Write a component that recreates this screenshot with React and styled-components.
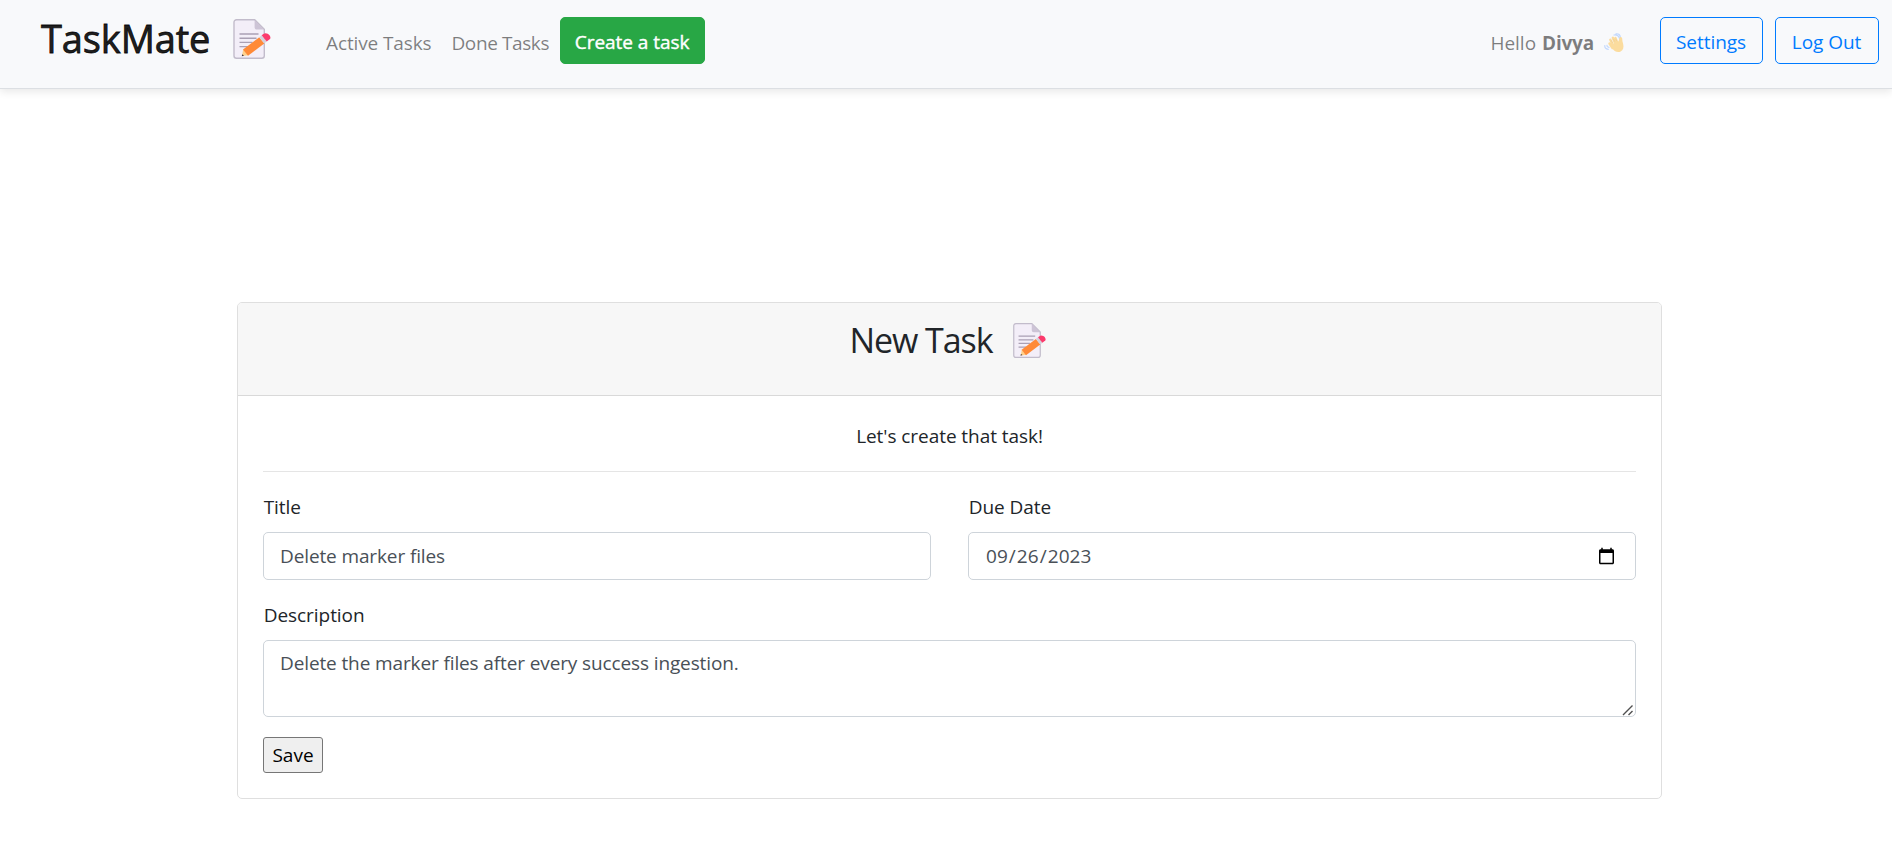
import React from "react";
import styled, { createGlobalStyle } from "styled-components";

const GlobalStyle = createGlobalStyle`
  *, *::before, *::after { box-sizing: border-box; }
  body {
    margin: 0;
    background: #fff;
    color: #212529;
    font-family: "Open Sans", "Noto Sans", sans-serif;
    font-size: 19px;
    line-height: 30px;
  }
`;

const Navbar = styled.header`
  display: flex;
  align-items: flex-start;
  height: 89px;
  padding: 17px 13px 0 41px;
  background: #f8f9fb;
  border-bottom: 1px solid #dcdfe3;
  box-shadow: 0 3px 8px rgba(0, 0, 0, 0.09);
`;

const Brand = styled.a`
  display: flex;
  align-items: flex-start;
  width: 285px;
  margin-top: 2px;
  gap: 22px;
  color: rgba(0, 0, 0, 0.9);
  font-size: 38px;
  letter-spacing: -0.12px;
  line-height: 38px;
  white-space: nowrap;
  -webkit-text-stroke: 0.8px currentColor;
`;

const NavItem = styled.a`
  margin-top: 11px;
  margin-right: ${(p) => p.$gap}px;
  color: rgba(0, 0, 0, 0.5);
  letter-spacing: ${(p) => p.$tracking}px;
  white-space: nowrap;
`;

const Greeting = styled.div`
  display: flex;
  gap: 10px;
  margin: 11px 36px 0 auto;
  color: rgba(0, 0, 0, 0.5);
  white-space: nowrap;
  word-spacing: 1px;

  b { letter-spacing: -0.2px; }
  svg { margin-top: 5px; }
`;

const Button = styled.button`
  width: ${(p) => p.$width}px;
  height: 47px;
  margin-left: ${(p) => p.$gap || 0}px;
  padding: 3px 1px 0 0;
  border: 1px solid ${(p) => (p.$solid ? "#28a745" : "#007bff")};
  border-radius: 5px;
  background: ${(p) => (p.$solid ? "#28a745" : "transparent")};
  color: ${(p) => (p.$solid ? "#fff" : "#007bff")};
  font: inherit;
  letter-spacing: -0.05px;
  -webkit-text-stroke: ${(p) => (p.$solid ? 0.4 : 0)}px currentColor;
  white-space: nowrap;
`;

const Card = styled.main`
  width: 1425px;
  height: 497px;
  margin: 213px 0 0 237px;
  border: 1px solid #dfdfdf;
  border-radius: 5px;
  background: #fff;
`;

const CardHeader = styled.div`
  display: flex;
  justify-content: center;
  gap: 19px;
  height: 93px;
  padding: 20px 3px 0 0;
  background: #f7f7f7;
  border-bottom: 1px solid #d9d9d9;
  border-radius: 4px 4px 0 0;
`;

const CardTitle = styled.h2`
  margin: 0;
  font-size: 34px;
  font-weight: 400;
  letter-spacing: -1.05px;
  line-height: 34px;
  white-space: nowrap;
`;

const CardBody = styled.form`
  padding: 25px;
`;

const Intro = styled.p`
  margin: 0;
  letter-spacing: -0.06px;
  text-align: center;
`;

const Divider = styled.hr`
  margin: 20px 0;
  border: 0;
  border-top: 1px solid #e5e5e5;
`;

const FieldGrid = styled.div`
  display: grid;
  grid-template-columns: 1fr 1fr;
  gap: 20px 37px;
`;

const Field = styled.label`
  display: flex;
  flex-direction: column;
  gap: 10px;
  grid-column: ${(p) => (p.$wide ? "1 / -1" : "auto")};
`;

const FieldName = styled.span`
  padding-left: 0.7px;
  letter-spacing: -0.05px;
`;

const Control = styled.input`
  width: 100%;
  height: 48px;
  padding: 7px 17px 7px 16px;
  border: 1px solid #ced4da;
  border-radius: 5px;
  background: #fff;
  color: #495057;
  font: inherit;
  letter-spacing: ${(p) => (p.type === "date" ? 0.05 : -0.12)}px;
`;

const TextAreaBox = styled.div`
  position: relative;
`;

const TextArea = styled(Control)`
  display: block;
  height: 77px;
  resize: none;
`;

const ResizeGrip = styled.svg`
  position: absolute;
  right: 2px;
  bottom: 1px;
`;

const SaveButton = styled.button`
  display: block;
  width: 60px;
  height: 36px;
  margin-top: 20px;
  padding: 0;
  border: 1px solid #767676;
  border-radius: 3px;
  background: #efefef;
  color: #000;
  font: inherit;
`;

function MemoIcon({ size }) {
  return (
    <svg width={size} height={size} viewBox="0 0 40 40" fill="none">
      <path d="M4.500 .7h18.200l9.600 9.600v26.500a2.500 2.500 0 0 1-2.500 2.500H4.500A2.500 2.500 0 0 1 2 36.800V3.200A2.500 2.500 0 0 1 4.500.7Z" fill="#f3eef8" stroke="#c2bccb" strokeWidth="1.4" />
      <path d="M22.600.9v7.300c0 1.400.9 2.300 2.300 2.300h7.200Z" fill="#cdc4d6" />
      <path d="M7.500 15h19M7.500 19.200h17M7.500 23.400h13M7.500 27.600h9" stroke="#aaa0b4" strokeWidth="1.4" />
      <path d="m10 37 1.200-6.800 5.600 6Z" fill="#ffd08a" />
      <path d="m9.800 37.300.4-2 1.800 1.400Z" fill="#3e3740" />
      <path d="M11 30.600 27.300 18.200l5 6.300L16 36.800Z" fill="#ff8a38" />
      <path d="m27.300 18.200 2.400-1.900 5 6.300-2.400 1.900Z" fill="#d5d1db" />
      <path d="m29.700 16.300 1.700-1.300c3.400-2.500 8.600 2.400 6.600 5.100l-3.300 2.500Z" fill="#fb3b6c" />
    </svg>
  );
}

function WaveIcon() {
  return (
    <svg width="20" height="20" viewBox="0 0 20 20" fill="none" opacity=".5">
      <path d="M10 2q4-1 5.500 3.500M12 .8q4-.5 4.500 4M.8 12.500q-.3 3.500 3.500 3.800M3 12.300q-.2 1.800 2 2" stroke="#8db8ff" strokeWidth="1.200" strokeLinecap="round" />
      <path d="m8.500 15-3-4.500M9 12 6.300 6.800M11 10 8.800 4.800M13 9l-1.600-4" stroke="#ffc043" strokeWidth="2.400" strokeLinecap="round" />
      <path d="M7.300 12 14.500 8.200l1-3.400c1-1.600 2.700-.8 2.700 1 0 1.500.4 3.200.9 5 .9 3.500.2 6.500-2.500 7.800-3 1.400-6.700-.2-8.800-3.800Z" fill="#ffc043" />
      <path d="m8.600 10-1.500-2.800M10.800 8.700 9.400 6M12.700 8l-1-2.200" stroke="#d99a2c" strokeWidth=".5" />
    </svg>
  );
}

export default function App() {
  return (
    <>
      <GlobalStyle />
      <Navbar>
        <Brand>
          <span>TaskMate</span>
          <MemoIcon size={40} />
        </Brand>
        <NavItem $gap={20} $tracking={-0.12}>Active Tasks</NavItem>
        <NavItem $gap={11} $tracking={-0.4}>Done Tasks</NavItem>
        <Button $solid $width={145}>Create a task</Button>
        <Greeting>
          <span>Hello <b>Divya</b></span>
          <WaveIcon />
        </Greeting>
        <Button $width={103}>Settings</Button>
        <Button $width={104} $gap={12}>Log Out</Button>
      </Navbar>
      <Card>
        <CardHeader>
          <CardTitle>New Task</CardTitle>
          <MemoIcon size={35} />
        </CardHeader>
        <CardBody>
          <Intro>Let's create that task!</Intro>
          <Divider />
          <FieldGrid>
            <Field>
              <FieldName>Title</FieldName>
              <Control defaultValue="Delete marker files" />
            </Field>
            <Field>
              <FieldName>Due Date</FieldName>
              <Control type="date" defaultValue="2023-09-26" />
            </Field>
            <Field $wide>
              <FieldName>Description</FieldName>
              <TextAreaBox>
                <TextArea as="textarea" defaultValue="Delete the marker files after every success ingestion." />
                <ResizeGrip width="12" height="12" viewBox="0 0 12 12">
                  <path d="M1 11 10.500 1.500M6.500 11l4-4" stroke="#505050" strokeWidth="1.4" />
                </ResizeGrip>
              </TextAreaBox>
            </Field>
          </FieldGrid>
          <SaveButton type="button">Save</SaveButton>
        </CardBody>
      </Card>
    </>
  );
}
